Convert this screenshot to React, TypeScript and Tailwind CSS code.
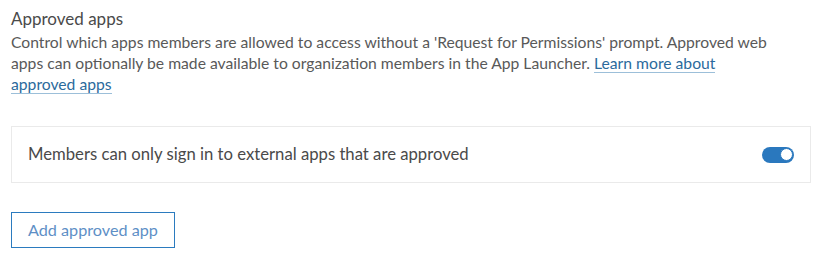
import React from "react";

export default function App() {
  return (
    <div
      className="w-[819px] h-[259px] bg-white px-[11px] pt-[7px] text-[#4a4a4a]"
      style={{ fontFamily: "Lato, 'Noto Sans', sans-serif" }}
    >
      <h2 className="text-[17px] leading-[24px] text-[#4a4a4a]">Approved apps</h2>
      <p className="text-[15.7px] leading-[21px] text-[#595959] w-[765px] pt-[1px]">
        Control which apps members are allowed to access without a 'Request for Permissions' prompt. Approved web
        apps can optionally be made available to organization members in the App Launcher.{" "}
        <a className="text-[#2b6a9c] border-b border-[#9cbfd9]" href="#">
          Learn more about approved apps
        </a>
      </p>
      <div className="mt-[31px] w-[800px] h-[57px] border border-[#eaeaea] flex items-center justify-between pl-[16px] pr-[16px]">
        <span className="text-[16.7px] text-[#4a4a4a]">Members can only sign in to external apps that are approved</span>
        <div className="w-[32px] h-[16px] rounded-full bg-[#2a78be] flex items-center justify-end pr-[1px]">
          <div className="w-[13px] h-[13px] rounded-full bg-white border border-[#2a78be]" />
        </div>
      </div>
      <button className="mt-[29px] w-[164px] h-[36px] border border-[#2b7bbf] text-[16.2px] text-[#5e8fc6] text-left pl-[16px]">
        Add approved app
      </button>
    </div>
  );
}
